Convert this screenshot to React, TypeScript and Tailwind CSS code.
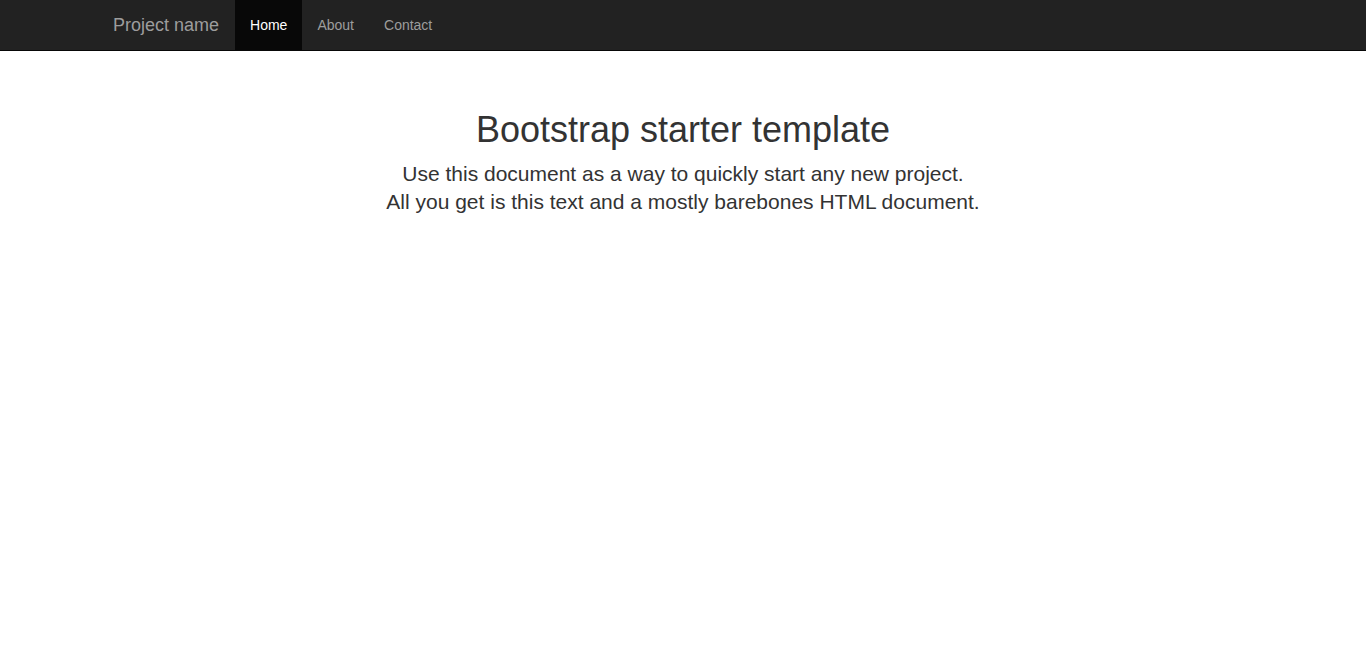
export default function App() {
  return (
    <div className="min-h-screen bg-white font-['Liberation_Sans',Arial,sans-serif] text-[14px] text-[#333]">
      {/* Navbar */}
      <nav className="fixed top-0 inset-x-0 z-50 bg-[#222] border-b border-[#080808]">
        <div className="w-[1170px] mx-auto px-[15px] flex items-center min-h-[50px]">
          <a href="#" className="-ml-[15px] px-[15px] py-[15px] text-[18px] leading-[20px] text-[#9d9d9d] h-[50px]">
            Project name
          </a>
          <ul className="flex ml-px">
            <li>
              <a href="#" className="block px-[15px] py-[15px] leading-[20px] bg-[#080808] text-white">Home</a>
            </li>
            <li>
              <a href="#about" className="block px-[15px] py-[15px] leading-[20px] text-[#9d9d9d]">About</a>
            </li>
            <li>
              <a href="#contact" className="block px-[15px] py-[15px] leading-[20px] text-[#9d9d9d]">Contact</a>
            </li>
          </ul>
        </div>
      </nav>

      <div className="pt-[50px]">
        <div className="w-[1170px] mx-auto px-[15px]">
          <div className="px-[15px] py-[40px] text-center">
            <h1 className="mt-[20px] mb-[10px] text-[36px] leading-[1.1] font-medium">Bootstrap starter template</h1>
            <p className="mb-[20px] text-[21px] leading-[28.5px] font-light">
              Use this document as a way to quickly start any new project.<br />
              All you get is this text and a mostly barebones HTML document.
            </p>
          </div>
        </div>
      </div>
    </div>
  )
}
